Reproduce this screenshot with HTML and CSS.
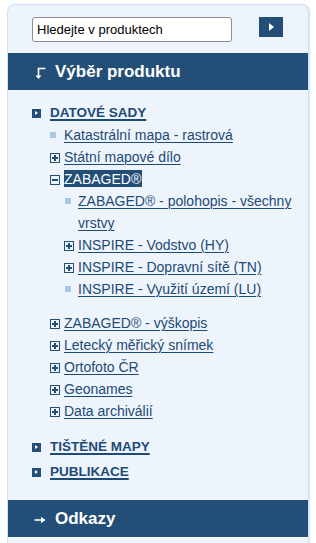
FILE: index.html
```html
<!DOCTYPE html>
<html lang="cs">
<head>
<meta charset="utf-8">
<link rel="stylesheet" href="styles.css">
</head>
<body>
<div class="panel">
  <form class="search">
    <input class="search-input" type="text" value="Hledejte v produktech">
    <button class="search-btn" type="button"><span class="tri"></span></button>
  </form>
  <h2 class="bar">
    <svg class="bar-icon" width="12" height="14" viewBox="0 0 12 14"><path d="M11.5 2.5H4.5V11" fill="none" stroke="#fff" stroke-width="1.6"/><path d="M1.5 9.5L4.5 13L7.5 9.5Z" fill="#fff"/></svg>
    Výběr produktu
  </h2>
  <ul class="top">
    <li class="top-item">
      <a class="top-link" href="#"><span class="sq"></span><span class="u">DATOVÉ SADY</span></a>
      <ul class="sub">
        <li class="row"><span class="dot"></span><a class="u" href="#">Katastrální mapa - rastrová</a></li>
        <li class="row"><span class="box">+</span><a class="u" href="#">Státní mapové dílo</a></li>
        <li class="row"><span class="box minus"></span><a class="u sel" href="#">ZABAGED®</a>
          <ul class="sub2">
            <li class="row"><span class="dot"></span><a class="u" href="#">ZABAGED® - polohopis - všechny vrstvy</a></li>
            <li class="row"><span class="box plus2"></span><a class="u" href="#">INSPIRE - Vodstvo (HY)</a></li>
            <li class="row"><span class="box plus2"></span><a class="u" href="#">INSPIRE - Dopravní sítě (TN)</a></li>
            <li class="row"><span class="dot"></span><a class="u" href="#">INSPIRE - Využití území (LU)</a></li>
          </ul>
        </li>
        <li class="row"><span class="box">+</span><a class="u" href="#">ZABAGED® - výškopis</a></li>
        <li class="row"><span class="box">+</span><a class="u" href="#">Letecký měřický snímek</a></li>
        <li class="row"><span class="box">+</span><a class="u" href="#">Ortofoto ČR</a></li>
        <li class="row"><span class="box">+</span><a class="u" href="#">Geonames</a></li>
        <li class="row"><span class="box">+</span><a class="u" href="#">Data archiválií</a></li>
      </ul>
    </li>
    <li class="top-item"><a class="top-link" href="#"><span class="sq"></span><span class="u">TIŠTĚNÉ MAPY</span></a></li>
    <li class="top-item"><a class="top-link" href="#"><span class="sq"></span><span class="u">PUBLIKACE</span></a></li>
  </ul>
  <h2 class="bar bar2">
    <svg class="bar-icon" width="12" height="10" viewBox="0 0 12 10"><path d="M0.5 5H8" stroke="#fff" stroke-width="1.6"/><path d="M7 1.8L11.5 5L7 8.2Z" fill="#fff"/></svg>
    Odkazy
  </h2>
</div>
</body>
</html>
```

FILE: styles.css
```css
html, body {
  margin: 0;
  padding: 0;
  background: #fff;
}
body {
  padding: 5px 8px 0 8px;
  font-family: "Liberation Sans", Arial, sans-serif;
}
.panel {
  width: 300px;
  height: 560px;
  background: #eef4fb;
  border-radius: 7px 7px 0 0;
  box-shadow: 0 0 0 1px #cfe0f2, 1px 0 2px 1px #d6e5f4;
  overflow: hidden;
}
.search {
  display: flex;
  align-items: flex-start;
  padding: 12px 0 0 24px;
  height: 36px;
  margin: 0;
}
.search-input {
  box-sizing: border-box;
  width: 200px;
  height: 25px;
  border: 1px solid #8a8f96;
  border-radius: 3px;
  background: #fff;
  padding: 0 4px;
  font-family: "Liberation Sans", Arial, sans-serif;
  font-size: 13px;
  color: #000;
  outline: none;
}
.search-btn {
  margin-left: 27px;
  width: 24px;
  height: 20px;
  border: 0;
  padding: 0;
  background: #234e78;
  display: flex;
  align-items: center;
  justify-content: center;
}
.tri {
  width: 0;
  height: 0;
  border-top: 4px solid transparent;
  border-bottom: 4px solid transparent;
  border-left: 5px solid #fff;
  margin-left: 1px;
}
.bar {
  margin: 0;
  height: 37px;
  background: #234e78;
  color: #fff;
  font-size: 17px;
  font-weight: bold;
  display: flex;
  align-items: center;
  padding-left: 26px;
}
.bar-icon {
  margin-right: 9px;
  margin-top: 2px;
}
ul {
  list-style: none;
  margin: 0;
  padding: 0;
}
.top {
  padding: 12px 0 14px 24px;
}
.top-item {
  line-height: 22px;
  margin-bottom: 3px;
}
.top-link {
  display: flex;
  align-items: center;
  color: #1d4a77;
  font-weight: bold;
  font-size: 13.5px;
  text-decoration: none;
}
.u {
  color: #1d4a77;
  text-decoration: underline;
  text-decoration-thickness: 1px;
  text-underline-offset: 2px;
}
.top-link .u {
  text-decoration-thickness: 2px;
}
.sq {
  width: 9px;
  height: 9px;
  background: #234e78;
  margin-right: 9px;
  position: relative;
  flex: none;
}
.sq::after {
  content: "";
  position: absolute;
  left: 3px;
  top: 2px;
  border-top: 2.5px solid transparent;
  border-bottom: 2.5px solid transparent;
  border-left: 3px solid #fff;
}
.sub {
  padding-left: 18px;
  margin-bottom: 14px;
}
.sub2 {
  padding-left: 0;
  margin-bottom: 12px;
}
.row {
  line-height: 22px;
  font-size: 14px;
  position: relative;
  padding-left: 14px;
}
.dot {
  position: absolute;
  left: 0;
  top: 8px;
  width: 6px;
  height: 6px;
  background: #a9c9ea;
}
.sub2 .dot {
  left: 1px;
}
.box {
  position: absolute;
  left: 0;
  top: 7px;
  box-sizing: border-box;
  width: 10px;
  height: 10px;
  border: 1px solid #234e78;
  font-size: 0;
}
.box::before, .box::after {
  content: "";
  position: absolute;
  background: #234e78;
}
.box::before {
  left: 1px;
  top: 3px;
  width: 6px;
  height: 2px;
}
.box::after {
  left: 3px;
  top: 1px;
  width: 2px;
  height: 6px;
}
.box.minus::after {
  display: none;
}
.sel {
  background: #234e78;
  color: #fff;
  text-decoration: none;
  padding: 1px 1px 0 0;
}
```
